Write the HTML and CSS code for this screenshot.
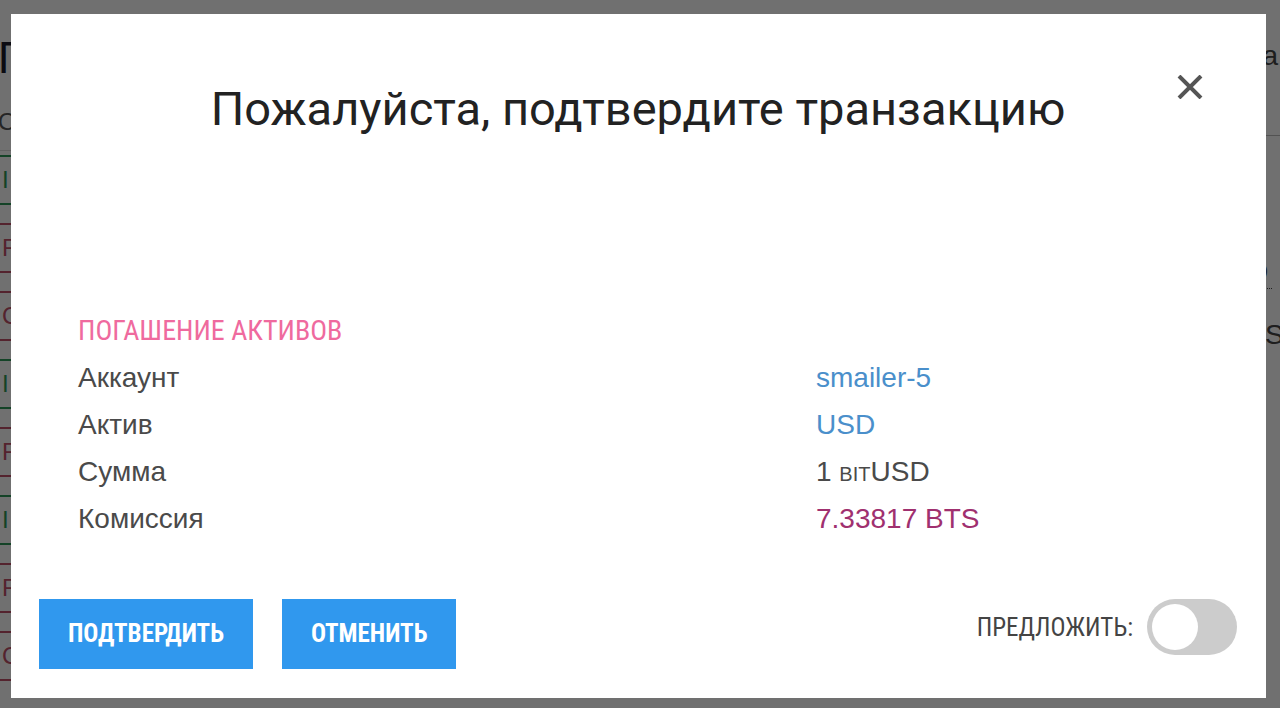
FILE: index.html
```html
<!DOCTYPE html>
<html lang="ru">
<head>
<meta charset="utf-8">
<title>Подтверждение транзакции</title>
<link rel="stylesheet" href="styles.css">
</head>
<body>
<div class="page">
  <div class="page-left">
    <div class="page-title">Погашение</div>
    <div class="page-sub">Обзор</div>
    <ul class="tags">
      <li class="tag tag-green">I</li>
      <li class="tag tag-red">F</li>
      <li class="tag tag-red">C</li>
      <li class="tag tag-green">I</li>
      <li class="tag tag-red">F</li>
      <li class="tag tag-green">I</li>
      <li class="tag tag-red">F</li>
      <li class="tag tag-red">C</li>
    </ul>
  </div>
  <div class="page-right">
    <div class="pr-head">ва</div>
    <div class="pr-d">D</div>
    <div class="pr-ts">TS</div>
    <div class="pr-two">2</div>
    <div class="pr-s">S</div>
  </div>
</div>

<div class="overlay">
  <div class="modal">
    <button class="close" aria-label="Закрыть">
      <svg width="26" height="24" viewBox="0 0 26 24"><path d="M2 1 L24 23 M24 1 L2 23" stroke="#555" stroke-width="4" fill="none"/></svg>
    </button>
    <h1 class="title">Пожалуйста, подтвердите транзакцию</h1>

    <div class="details">
      <div class="op-name">ПОГАШЕНИЕ АКТИВОВ</div>
      <div class="row"><span class="label">Аккаунт</span><span class="value link">smailer-5</span></div>
      <div class="row"><span class="label">Актив</span><span class="value link">USD</span></div>
      <div class="row"><span class="label">Сумма</span><span class="value">1 <span class="sc">bit</span>USD</span></div>
      <div class="row"><span class="label">Комиссия</span><span class="value fee">7.33817 BTS</span></div>
    </div>

    <div class="footer">
      <div class="actions">
        <button class="btn">ПОДТВЕРДИТЬ</button>
        <button class="btn">ОТМЕНИТЬ</button>
      </div>
      <div class="propose">
        <span class="propose-label">ПРЕДЛОЖИТЬ:</span>
        <span class="switch"><span class="knob"></span></span>
      </div>
    </div>
  </div>
</div>
</body>
</html>
```

FILE: styles.css
```css
* { box-sizing: border-box; }

html, body {
  margin: 0;
  padding: 0;
  width: 1280px;
  height: 708px;
  overflow: hidden;
  font-family: "Liberation Sans", Arial, sans-serif;
  background: #ffffff;
}

/* ---------- page behind the dialog ---------- */
.page {
  display: flex;
  justify-content: space-between;
  height: 708px;
  overflow: hidden;
}

.page-left {
  width: 220px;
  margin-left: -2px;
}

.page-title {
  font-size: 44px;
  line-height: 44px;
  margin-top: 36px;
  color: #1a1a2a;
}

.page-sub {
  margin-top: 28px;
  font-size: 24px;
  color: #555;
  padding-bottom: 14px;
  border-bottom: 1px solid #ddd;
}

.tags {
  list-style: none;
  margin: 4px 0 0 0;
  padding: 0;
}

.tag {
  height: 50px;
  margin-bottom: 18px;
  padding-left: 4px;
  border-top: 2px solid;
  border-bottom: 2px solid;
  font-size: 24px;
  line-height: 46px;
}

.tag-green { color: #2f9a5a; border-color: #2f9a5a; }
.tag-red { color: #c0506a; border-color: #c0506a; }

.page-right {
  width: 40px;
  display: flex;
  flex-direction: column;
  font-size: 28px;
  color: #444;
  margin-right: -8px;
}

.pr-head { margin-top: 40px; height: 96px; border-bottom: 1px solid #bbb; }
.pr-d { margin-top: 120px; border-bottom: 1px dotted #444; width: 24px; }
.pr-ts { margin-top: 30px; }
.pr-two { margin-top: 100px; }
.pr-s { margin-top: 160px; }

/* ---------- overlay + dialog ---------- */
.overlay {
  position: fixed;
  inset: 0;
  background: rgba(0, 0, 0, 0.56);
  display: flex;
  align-items: flex-start;
}

.modal {
  position: relative;
  margin: 14px 0 0 11px;
  width: 1255px;
  height: 684px;
  background: #ffffff;
  padding: 28px 29px 29px 28px;
  display: flex;
  flex-direction: column;
}

.close {
  position: absolute;
  top: 61px;
  left: 1166px;
  width: 26px;
  height: 24px;
  padding: 0;
  border: 0;
  background: none;
  display: block;
}

.close svg { display: block; }

.title {
  margin: 39px 0 0 0;
  font-family: Roboto, "Liberation Sans", sans-serif;
  font-weight: 400;
  font-size: 47px;
  line-height: 56px;
  color: #222;
  text-align: center;
}

.details {
  margin-top: 171px;
  padding-left: 39px;
}

.op-name {
  font-family: "Liberation Sans Narrow", "Roboto Condensed", "Arial Narrow", Roboto, sans-serif;
  font-size: 28px;
  line-height: 46px;
  color: #ef6a9e;
}

.row {
  display: grid;
  grid-template-columns: 738px 1fr;
  font-size: 28px;
  line-height: 47px;
  color: #4a4a4a;
}

.link { color: #4a8fcb; }
.fee { color: #a0306f; }
.sc { font-variant: small-caps; }

.footer {
  margin-top: auto;
  display: flex;
  justify-content: space-between;
  align-items: flex-start;
}

.actions {
  display: flex;
  gap: 29px;
}

.btn {
  height: 70px;
  padding: 0 29px;
  border: 0;
  background: #3098ee;
  color: #ffffff;
  font-family: "Liberation Sans Narrow", "Roboto Condensed", "Arial Narrow", Roboto, sans-serif;
  font-weight: 700;
  font-size: 25px;
  line-height: 70px;
}

.propose {
  display: flex;
  align-items: center;
  gap: 14px;
}

.propose-label {
  font-family: "Liberation Sans Narrow", "Roboto Condensed", "Arial Narrow", Roboto, sans-serif;
  font-size: 25px;
  color: #444;
}

.switch {
  width: 90px;
  height: 56px;
  border-radius: 28px;
  background: #cccccc;
  padding: 5px;
  display: flex;
}

.knob {
  width: 46px;
  height: 46px;
  border-radius: 50%;
  background: #ffffff;
}
```
